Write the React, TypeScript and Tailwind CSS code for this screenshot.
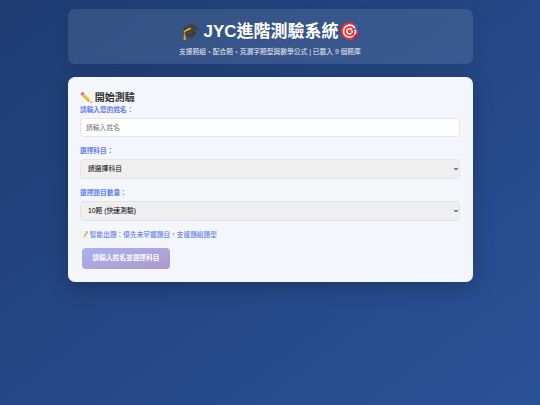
import { useState } from "react"
import { ChevronDown } from "lucide-react"

const cjk = "font-['Liberation_Sans','Noto_Sans_CJK_TC',sans-serif]"

function Field({ label, children }: { label: string; children: React.ReactNode }) {
    return (
        <div className="mb-[9px]">
            <label className="block mb-[3px] text-[6.7px] leading-[10px] font-semibold text-[#667eea]">{label}</label>
            {children}
        </div>
    )
}

function Select({ value, onChange, options }: { value: string; onChange: (v: string) => void; options: [string, string][] }) {
    return (
        <div className="relative">
            <select
                value={value}
                onChange={(e) => onChange(e.target.value)}
                className="block w-full h-[20px] appearance-none rounded-[4px] border border-[#e1e5e9] bg-[#efefef] pl-[7px] text-[6.8px] text-black outline-none"
            >
                {options.map(([v, text]) => (
                    <option key={v} value={v}>{text}</option>
                ))}
            </select>
            <ChevronDown className="absolute right-[1px] top-[7px] w-[6px] h-[6px] text-black pointer-events-none" strokeWidth={4} />
        </div>
    )
}

export default function App() {
    const [name, setName] = useState("")
    const [subject, setSubject] = useState("")
    const [count, setCount] = useState("10")

    return (
        <div className={`${cjk} min-h-[405px] bg-gradient-to-br from-[#1e3c72] to-[#2a5298] px-[67.5px] pt-[8.5px]`}>
            {/* Header */}
            <div className="h-[55.5px] rounded-[7px] bg-white/10 flex flex-col items-center pt-[12px] shadow-[0_4px_16px_rgba(0,0,0,0.08)] mb-[13px]">
                <h1 className="text-[17px] leading-[22px] font-bold text-white flex items-center">
                    <span className="mr-[2px]">🎓</span>JYC進階測驗系統<span>🎯</span>
                </h1>
                <p className="mt-[4px] text-[6.75px] leading-[9px] text-white/90">
                    支援題組、配合題、克漏字題型與數學公式 | 已載入 9 個題庫
                </p>
            </div>

            {/* Form card */}
            <div className="h-[205px] rounded-[7px] bg-[#f4f6fb] px-[12.5px] pt-[14px] shadow-[0_5px_20px_rgba(0,0,0,0.25)]">
                <h2 className="text-[10px] leading-[14px] font-bold text-[#333]">✏️ 開始測驗</h2>
                <Field label="請輸入您的姓名：">
                    <input
                        value={name}
                        onChange={(e) => setName(e.target.value)}
                        placeholder="請輸入姓名"
                        className="block w-full h-[19px] rounded-[4px] border border-[#e1e5e9] bg-white px-[5px] text-[6.8px] placeholder:text-[#757575] outline-none"
                    />
                </Field>
                <Field label="選擇科目：">
                    <Select value={subject} onChange={setSubject} options={[["", "請選擇科目"]]} />
                </Field>
                <Field label="選擇題目數量：">
                    <Select value={count} onChange={setCount} options={[["10", "10題 (快速測驗)"]]} />
                </Field>
                <p className="text-[6.7px] leading-[10px] font-medium text-[#667eea]">📝 智能出題：優先未掌握題目，支援題組題型</p>
                <button
                    disabled
                    className="block mt-[8px] ml-[2px] h-[20.5px] w-[88px] rounded-[4px] bg-gradient-to-br from-[#667eea] to-[#764ba2] opacity-55 text-[6.7px] font-semibold text-white"
                >
                    請輸入姓名並選擇科目
                </button>
            </div>
        </div>
    )
}
